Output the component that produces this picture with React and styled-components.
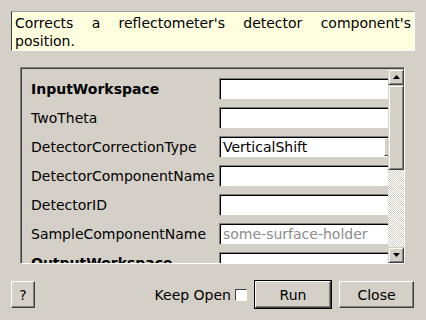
import styled, { createGlobalStyle } from 'styled-components';

const GlobalStyle = createGlobalStyle`
  html, body {
    margin: 0;
    padding: 0;
    background: #d4d0c8;
  }
  body {
    font-family: "DejaVu Sans", "Liberation Sans", sans-serif;
    font-size: 14px;
    color: #000;
  }
`;

const Dialog = styled.div`
  width: 426px;
  height: 320px;
  box-sizing: border-box;
  padding: 11px 11px 0 11px;
  display: flex;
  flex-direction: column;
  background: #d4d0c8;
  overflow: hidden;
`;

const Description = styled.div`
  height: 40px;
  box-sizing: border-box;
  background: #ffffe0;
  border: 1px solid;
  border-color: #a0a0a0 #ffffff #ffffff #404040;
  padding: 2px 3px 0 3px;
  line-height: 18px;
  text-align: justify;
  text-align-last: left;
`;

const Frame = styled.div`
  margin: 16px 10px 0 9px;
  height: 197px;
  box-sizing: border-box;
  display: flex;
  border: 1px solid;
  border-color: #808080 #ffffff #ffffff #808080;
  box-shadow: inset 1px 1px 0 #404040;
  padding: 1px 0 0 1px;
`;

const Viewport = styled.div`
  flex: 1;
  overflow: hidden;
  position: relative;
`;

const PropGrid = styled.div`
  display: grid;
  grid-template-columns: 188px 182px;
  grid-auto-rows: 22px;
  row-gap: 7px;
  padding: 9px 0 0 9px;
`;

const Label = styled.div`
  display: flex;
  align-items: center;
  font-weight: ${(p) => (p.$bold ? 'bold' : 'normal')};
  white-space: nowrap;
`;

const Field = styled.div`
  box-sizing: border-box;
  height: 22px;
  background: #fff;
  border: 1px solid;
  border-color: #808080 #d4d0c8 #d4d0c8 #808080;
  box-shadow: inset 1px 1px 0 #000, inset -1px -1px 0 #fff;
  padding: 0 3px 0 3px;
  display: flex;
  align-items: center;
  color: ${(p) => (p.$placeholder ? '#8c8c8c' : '#000')};
  white-space: nowrap;
`;

const Combo = styled(Field)`
  padding-right: 0;
  justify-content: space-between;
`;

const ComboButton = styled.div`
  width: 16px;
  height: 18px;
  box-sizing: border-box;
  background: #d4d0c8;
  border: 1px solid;
  border-color: #fff #404040 #404040 #fff;
`;

const ScrollBar = styled.div`
  width: 16px;
  display: flex;
  flex-direction: column;
`;

const ArrowButton = styled.div`
  height: 16px;
  box-sizing: border-box;
  background: #d4d0c8;
  border: 1px solid;
  border-color: #d4d0c8 #404040 #404040 #d4d0c8;
  box-shadow: inset 1px 1px 0 #fff, inset -1px -1px 0 #808080;
  display: flex;
  align-items: center;
  justify-content: center;
`;

const Thumb = styled.div`
  height: 85px;
  box-sizing: border-box;
  background: #d4d0c8;
  border: 1px solid;
  border-color: #d4d0c8 #404040 #404040 #d4d0c8;
  box-shadow: inset 1px 1px 0 #fff, inset -1px -1px 0 #808080;
`;

const Track = styled.div`
  flex: 1;
  background: repeating-conic-gradient(#ffffff 0 25%, #d4d0c8 0 50%) 0 0 / 2px 2px;
`;

const ButtonRow = styled.div`
  margin-top: 17px;
  display: flex;
  align-items: center;
  padding-right: 1px;
`;

const Button = styled.button`
  font-family: inherit;
  font-size: 14px;
  color: #000;
  box-sizing: border-box;
  width: ${(p) => p.$w}px;
  height: 27px;
  background: #d4d0c8;
  border: 1px solid;
  border-color: #fff #404040 #404040 #fff;
  box-shadow: inset -1px -1px 0 #808080;
  padding: 0;
  margin-left: ${(p) => p.$ml || 0}px;
  outline: ${(p) => (p.$default ? '1px solid #000' : 'none')};
`;

const Spacer = styled.div`
  flex: 1;
`;

const CheckLabel = styled.label`
  display: flex;
  align-items: center;
  gap: 4px;
  margin-right: 8px;
`;

const CheckBox = styled.span`
  width: 12px;
  height: 12px;
  box-sizing: border-box;
  background: #fff;
  border: 1px solid;
  border-color: #404040 #fff #fff #404040;
`;

const Tri = ({ down }) => (
  <svg width="7" height="4" viewBox="0 0 7 4">
    <polygon points={down ? '0,0 7,0 3.5,4' : '0,4 7,4 3.5,0'} fill="#000" />
  </svg>
);

const props = [
  { name: 'InputWorkspace', bold: true },
  { name: 'TwoTheta' },
  { name: 'DetectorCorrectionType', value: 'VerticalShift', combo: true },
  { name: 'DetectorComponentName' },
  { name: 'DetectorID' },
  { name: 'SampleComponentName', placeholder: 'some-surface-holder' },
  { name: 'OutputWorkspace', bold: true },
];

export default function App() {
  return (
    <>
      <GlobalStyle />
      <Dialog>
        <Description>Corrects a reflectometer's detector component's position.</Description>
        <Frame>
          <Viewport>
            <PropGrid>
              {props.map((p) => (
                <>
                  <Label key={p.name} $bold={p.bold}>{p.name}</Label>
                  {p.combo ? (
                    <Combo key={p.name + '-f'}>
                      {p.value}
                      <ComboButton />
                    </Combo>
                  ) : (
                    <Field key={p.name + '-f'} $placeholder={!!p.placeholder}>
                      {p.placeholder || p.value || ''}
                    </Field>
                  )}
                </>
              ))}
            </PropGrid>
          </Viewport>
          <ScrollBar>
            <ArrowButton><Tri /></ArrowButton>
            <Thumb />
            <Track />
            <ArrowButton><Tri down /></ArrowButton>
          </ScrollBar>
        </Frame>
        <ButtonRow>
          <Button $w={24}>?</Button>
          <Spacer />
          <CheckLabel>
            Keep Open
            <CheckBox />
          </CheckLabel>
          <Button $w={76} $default>Run</Button>
          <Button $w={75} $ml={8}>Close</Button>
        </ButtonRow>
      </Dialog>
    </>
  );
}
